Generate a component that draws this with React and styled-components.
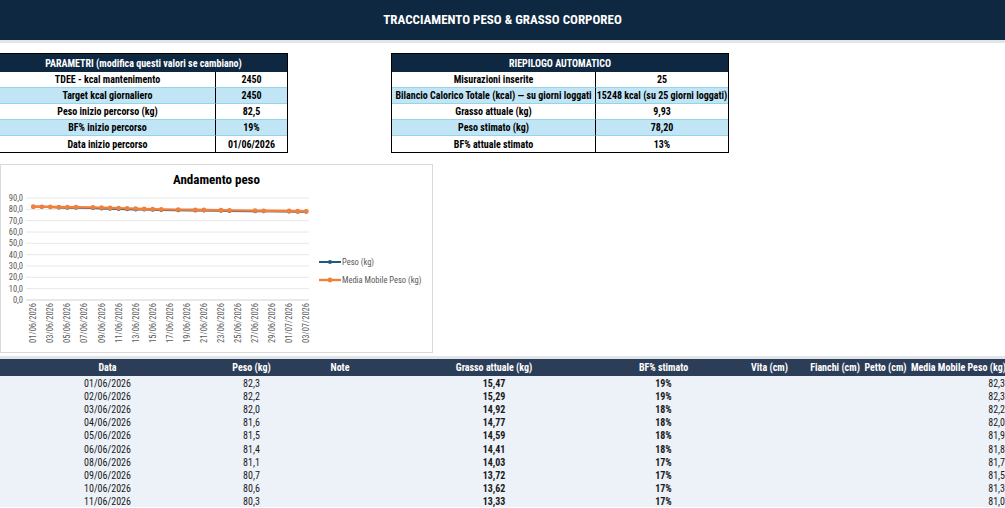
import React from "react";
import styled, { createGlobalStyle } from "styled-components";

const FONT = `"Liberation Sans Narrow", "Roboto Condensed", "DejaVu Sans Condensed", Roboto, sans-serif`;

const Global = createGlobalStyle`
  html, body { margin: 0; padding: 0; background: #ffffff; }
  body { font-family: ${FONT}; width: 1005px; height: 508px; overflow: hidden; }
  * { box-sizing: border-box; }
`;

const Page = styled.div`
  width: 1005px;
  display: flex;
  flex-direction: column;
`;

const TitleBar = styled.header`
  height: 43px;
  background: #0e2841;
  border-bottom: 3px solid #e1e5ea;
  color: #ffffff;
  font-weight: 700;
  font-size: 13px;
  display: flex;
  align-items: center;
  justify-content: center;
  padding-bottom: 2px;
`;

const TopRow = styled.div`
  display: flex;
  gap: 103px;
  margin-top: 10px;
  align-items: flex-start;
`;

const KvTable = styled.div`
  display: grid;
  grid-template-columns: ${(p) => p.$cols};
  width: ${(p) => p.$width}px;
  border: 1px solid #000;
  border-left: ${(p) => (p.$noLeft ? "none" : "1px solid #000")};
  font-size: 10px;
  font-weight: 700;
  color: #000;
`;

const KvHead = styled.div`
  grid-column: 1 / -1;
  height: 18px;
  background: #0e2841;
  color: #fff;
  display: flex;
  align-items: center;
  justify-content: center;
`;

const KvCell = styled.div`
  height: 16px;
  display: flex;
  align-items: center;
  justify-content: center;
  white-space: nowrap;
  background: ${(p) => (p.$alt ? "#c1e5f5" : "#ffffff")};
  border-bottom: ${(p) => (p.$last ? "none" : "1px solid #96d3ec")};
  border-right: ${(p) => (p.$divider ? "1px solid #000" : "none")};
`;

const ChartCard = styled.section`
  margin-top: 11px;
  width: 433px;
  height: 189px;
  border: 1px solid #d9d9d9;
  display: flex;
  flex-direction: column;
`;

const ChartTitle = styled.div`
  height: 29px;
  display: flex;
  align-items: flex-end;
  justify-content: center;
  font-size: 13px;
  font-weight: 700;
  color: #000;
  padding-bottom: 7px;
`;

const DataTable = styled.div`
  margin-top: 3px;
  border-top: 3px solid #e1e5ea;
  display: grid;
  grid-template-columns: 215px 73px 104px 204px 135px 77px 54px 47px 96px;
  font-size: 10px;
`;

const HeadCell = styled.div`
  height: 17px;
  background: #2c3d57;
  color: #fff;
  font-weight: 700;
  display: flex;
  align-items: center;
  justify-content: ${(p) => (p.$left ? "flex-start" : "center")};
  padding-left: ${(p) => (p.$left ? "2px" : "0")};
  white-space: nowrap;
  overflow: hidden;
`;

const BodyCell = styled.div`
  height: 13.1px;
  background: #edf2f9;
  color: #1a1a1a;
  font-weight: ${(p) => (p.$bold ? 700 : 400)};
  display: flex;
  align-items: center;
  justify-content: ${(p) => (p.$right ? "flex-end" : "center")};
  padding-top: 2px;
  white-space: nowrap;
  overflow: hidden;
`;

const params = [
  ["TDEE - kcal mantenimento", "2450"],
  ["Target kcal giornaliero", "2450"],
  ["Peso inizio percorso (kg)", "82,5"],
  ["BF% inizio percorso", "19%"],
  ["Data inizio percorso", "01/06/2026"],
];

const summary = [
  ["Misurazioni inserite", "25"],
  ["Bilancio Calorico Totale (kcal) — su giorni loggati", "15248 kcal (su 25 giorni loggati)"],
  ["Grasso attuale (kg)", "9,93"],
  ["Peso stimato (kg)", "78,20"],
  ["BF% attuale stimato", "13%"],
];

const entries = [
  ["01/06/2026", 0, 82.3], ["02/06/2026", 1, 82.2], ["03/06/2026", 2, 82.0],
  ["04/06/2026", 3, 81.6], ["05/06/2026", 4, 81.5], ["06/06/2026", 5, 81.4],
  ["08/06/2026", 7, 81.1], ["09/06/2026", 8, 80.7], ["10/06/2026", 9, 80.6],
  ["11/06/2026", 10, 80.3], ["12/06/2026", 11, 80.1], ["13/06/2026", 12, 79.9],
  ["14/06/2026", 13, 79.8], ["15/06/2026", 14, 79.6], ["16/06/2026", 15, 79.4],
  ["18/06/2026", 17, 79.2], ["20/06/2026", 19, 79.0], ["21/06/2026", 20, 78.9],
  ["23/06/2026", 22, 78.7], ["24/06/2026", 23, 78.6], ["27/06/2026", 26, 78.3],
  ["28/06/2026", 27, 78.2], ["01/07/2026", 30, 78.0], ["02/07/2026", 31, 77.9],
  ["03/07/2026", 32, 77.8],
];

const withMa = entries.map((e, i) => {
  const win = entries.slice(Math.max(0, i - 6), i + 1);
  const ma = win.reduce((s, w) => s + w[2], 0) / win.length;
  return { date: e[0], day: e[1], w: e[2], ma };
});

const fat = ["15,47", "15,29", "14,92", "14,77", "14,59", "14,41", "14,03", "13,72", "13,62", "13,33"];
const bf = ["19%", "19%", "18%", "18%", "18%", "18%", "17%", "17%", "17%", "17%"];

const fmt = (v) => v.toFixed(1).replace(".", ",");

const X0 = 32.3;
const DX = 8.53;
const Y0 = 106;
const KY = 102 / 90;
const px = (d) => X0 + d * DX;
const py = (v) => Y0 - v * KY;

const axisLabels = [];
for (let d = 0; d <= 32; d += 2) {
  const dt = new Date(2026, 5, 1 + d);
  const s = `${String(dt.getDate()).padStart(2, "0")}/${String(dt.getMonth() + 1).padStart(2, "0")}/2026`;
  axisLabels.push({ d, s });
}

function Chart() {
  const pesoPts = withMa.map((p) => `${px(p.day)},${py(p.w)}`).join(" ");
  const maPts = withMa.map((p) => `${px(p.day)},${py(p.ma)}`).join(" ");
  return (
    <svg width="431" height="158" viewBox="0 0 431 158" style={{ display: "block" }}>
      {Array.from({ length: 10 }, (_, i) => i * 10).map((v) => (
        <g key={v}>
          <line x1="25" x2="308" y1={py(v)} y2={py(v)} stroke={v === 0 ? "#c8c8c8" : "#e2e2e2"} strokeWidth="0.8" />
          <text x="22" y={py(v) + 3} textAnchor="end" fontSize="8.5" fill="#595959" fontFamily={FONT}>
            {fmt(v)}
          </text>
        </g>
      ))}
      {axisLabels.map((l) => (
        <text
          key={l.d}
          transform={`translate(${px(l.d) + 3},109) rotate(-90)`}
          textAnchor="end"
          fontSize="8.5"
          fill="#595959"
          fontFamily={FONT}
        >
          {l.s}
        </text>
      ))}
      <polyline points={pesoPts} fill="none" stroke="#1d5a80" strokeWidth="2" />
      {withMa.map((p) => (
        <circle key={"p" + p.day} cx={px(p.day)} cy={py(p.w)} r="2" fill="#1d5a80" />
      ))}
      <polyline points={maPts} fill="none" stroke="#f0803c" strokeWidth="2.4" />
      {withMa.map((p) => (
        <circle key={"m" + p.day} cx={px(p.day)} cy={py(p.ma)} r="2.4" fill="#f0803c" />
      ))}
      <line x1="318" x2="340" y1="68" y2="68" stroke="#1d5a80" strokeWidth="2" />
      <circle cx="329" cy="68" r="2" fill="#1d5a80" />
      <text x="341" y="71" fontSize="8.5" fill="#595959" fontFamily={FONT}>Peso (kg)</text>
      <line x1="318" x2="340" y1="86" y2="86" stroke="#f0803c" strokeWidth="2.4" />
      <circle cx="329" cy="86" r="2.4" fill="#f0803c" />
      <text x="341" y="89" fontSize="8.5" fill="#595959" fontFamily={FONT}>Media Mobile Peso (kg)</text>
    </svg>
  );
}

function Kv({ title, rows, cols, width, noLeft }) {
  return (
    <KvTable $cols={cols} $width={width} $noLeft={noLeft}>
      <KvHead>{title}</KvHead>
      {rows.map(([k, v], i) => (
        <React.Fragment key={k}>
          <KvCell $alt={i % 2 === 1} $last={i === rows.length - 1} $divider>{k}</KvCell>
          <KvCell $alt={i % 2 === 1} $last={i === rows.length - 1}>{v}</KvCell>
        </React.Fragment>
      ))}
    </KvTable>
  );
}

const headers = ["Data", "Peso (kg)", "Note", "Grasso attuale (kg)", "BF% stimato", "Vita (cm)", "Fianchi (cm)", "Petto (cm)", "Media Mobile Peso (kg)"];

export default function App() {
  return (
    <Page>
      <Global />
      <TitleBar>TRACCIAMENTO PESO &amp; GRASSO CORPOREO</TitleBar>
      <TopRow>
        <Kv title="PARAMETRI (modifica questi valori se cambiano)" rows={params} cols="216px 1fr" width={288} noLeft />
        <Kv title="RIEPILOGO AUTOMATICO" rows={summary} cols="204px 1fr" width={338} />
      </TopRow>
      <ChartCard>
        <ChartTitle>Andamento peso</ChartTitle>
        <Chart />
      </ChartCard>
      <DataTable>
        {headers.map((h, i) => (
          <HeadCell key={h} $left={i === headers.length - 1}>{h}</HeadCell>
        ))}
        {withMa.slice(0, 10).map((r, i) => (
          <React.Fragment key={r.date}>
            <BodyCell>{r.date}</BodyCell>
            <BodyCell>{fmt(r.w)}</BodyCell>
            <BodyCell />
            <BodyCell $bold>{fat[i]}</BodyCell>
            <BodyCell $bold>{bf[i]}</BodyCell>
            <BodyCell />
            <BodyCell />
            <BodyCell />
            <BodyCell $right>{fmt(r.ma)}</BodyCell>
          </React.Fragment>
        ))}
      </DataTable>
    </Page>
  );
}
